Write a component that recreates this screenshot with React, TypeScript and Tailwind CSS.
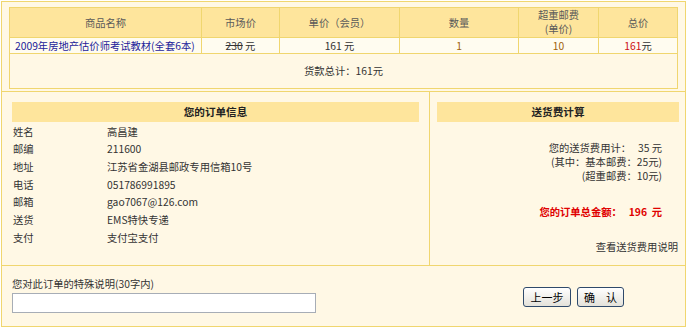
export default function App() {
  const bd = "border-[#f0d66f]";
  const rows: [string, string][] = [
    ["姓名", "高昌建"],
    ["邮编", "211600"],
    ["地址", "江苏省金湖县邮政专用信箱10号"],
    ["电话", "051786991895"],
    ["邮箱", "gao7067@126.com"],
    ["送货", "EMS特快专递"],
    ["支付", "支付宝支付"],
  ];
  return (
    <div className="w-[689px] h-[330px] bg-white font-['Noto_Sans_CJK_SC',sans-serif] text-[10.3px] leading-[14px] text-[#333]">
      <div className="ml-[1px] mt-[1px] w-[685px] border border-[#f0d66f] bg-[#fff8e5]">
        {/* product table */}
        <div className="px-[7px] pt-[5px] pb-[2px] border-b border-[#f0d66f]">
          <div className="border border-[#f0d66f]">
            <div className="flex h-[30px] border-b border-[#f0d66f] bg-[#fee59c] text-[#5a5a5a]">
              <div className="w-[191px] flex items-center justify-center">商品名称</div>
              <div className="w-[78px] border-l border-[#f0d66f] flex items-center justify-center">市场价</div>
              <div className="w-[120px] border-l border-[#f0d66f] flex items-center justify-center">单价（会员）</div>
              <div className="w-[119px] border-l border-[#f0d66f] flex items-center justify-center">数量</div>
              <div className="w-[80px] border-l border-[#f0d66f] flex flex-col items-center justify-center pb-[2px]">
                <span>超重邮费</span>
                <span>(单价)</span>
              </div>
              <div className="w-[79px] border-l border-[#f0d66f] flex items-center justify-center">总价</div>
            </div>
            <div className="flex h-[16px] border-b border-[#f0d66f] bg-[#fffcf0]">
              <div className="w-[191px] flex items-center pl-[5px] text-[#1d1d9a] whitespace-nowrap">2009年房地产估价师考试教材(全套6本)</div>
              <div className="w-[78px] border-l border-[#f0d66f] flex items-center justify-center whitespace-pre">
                <span className="line-through">230</span> 元
              </div>
              <div className="w-[120px] border-l border-[#f0d66f] flex items-center justify-center whitespace-pre">161 元</div>
              <div className="w-[119px] border-l border-[#f0d66f] flex items-center justify-center text-[#a0620a]">1</div>
              <div className="w-[80px] border-l border-[#f0d66f] flex items-center justify-center text-[#a0620a]">10</div>
              <div className="w-[79px] border-l border-[#f0d66f] flex items-center justify-center">
                <span className="text-[#cc1111]">161</span>元
              </div>
            </div>
            <div className="h-[34px] flex items-center justify-center">货款总计：161元</div>
          </div>
        </div>
        {/* middle */}
        <div className={`flex h-[174px] border-b ${bd}`}>
          <div className={`w-[428px] border-r ${bd} px-[10px] pt-[10px]`}>
            <div className="h-[20px] bg-[#fee59c] flex items-center justify-center font-bold text-[10.6px] text-[#222]">
              您的订单信息
            </div>
            <div className="pl-[1px] pt-[1px]">
              {rows.map(([k, v]) => (
                <div key={k} className="flex h-[17.67px] items-center">
                  <div className="w-[94px]">{k}</div>
                  <div>{v}</div>
                </div>
              ))}
            </div>
          </div>
          <div className="flex-1 pl-[7px] pr-[6px] pt-[10px]">
            <div className="h-[20px] bg-[#fee59c] flex items-center justify-center font-bold text-[10.6px] text-[#222]">
              送货费计算
            </div>
            <div className="pr-[17px] mt-[19px] flex flex-col items-end whitespace-pre">
              <div>您的送货费用计：   35 元</div>
              <div>(其中：基本邮费：25元)</div>
              <div>(超重邮费：10元)</div>
              <div className="mt-[22px] font-bold text-[#e00000]">您的订单总金额：   196  元</div>
            </div>
            <div className="pr-[1px] mt-[21px] text-right">查看送货费用说明</div>
          </div>
        </div>
        {/* bottom */}
        <div className="flex h-[60px]">
          <div className="pl-[10px] pt-[11px] w-[314px]">
            <div>您对此订单的特殊说明(30字内)</div>
            <input className="mt-[2px] block w-[304px] h-[20px] bg-white border border-[#a7adb6] outline-none" />
          </div>
          <div className="ml-[207px] mt-[21px] flex gap-[6px] h-[20px]">
            <button className="w-[48px] h-[20px] rounded-[3px] border border-[#2f4a6b] bg-gradient-to-b from-white to-[#e4e2da] text-[11px] text-black leading-none">
              上一步
            </button>
            <button className="w-[47px] h-[20px] rounded-[3px] border border-[#2f4a6b] bg-gradient-to-b from-white to-[#e4e2da] text-[11px] text-black leading-none whitespace-pre">
              确　认
            </button>
          </div>
        </div>
      </div>
    </div>
  );
}
